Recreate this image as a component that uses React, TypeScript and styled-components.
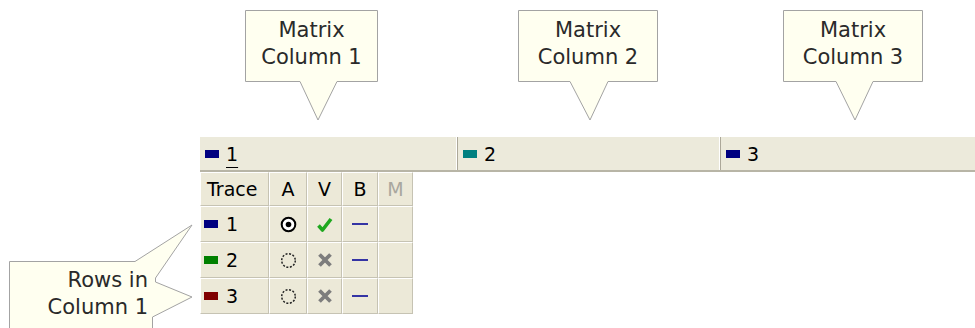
import React from "react";
import styled, { createGlobalStyle } from "styled-components";

const GlobalStyle = createGlobalStyle`
  html, body {
    margin: 0;
    padding: 0;
    background: #ffffff;
  }
  body {
    font-family: "DejaVu Sans", Verdana, sans-serif;
    color: #000;
  }
`;

const Page = styled.div`
  position: relative;
  width: 975px;
  height: 328px;
  box-sizing: border-box;
  padding: 137px 0 0 200px;
  overflow: hidden;
  background: #fff;
`;

/* ---- matrix column bar ---- */

const MatrixBar = styled.div`
  display: grid;
  grid-template-columns: 258px 263px 1fr;
  height: 33px;
  background: #eceadb;
  border-bottom: 2px solid #b8b5a6;
`;

const BarColumn = styled.div<{ $last?: boolean }>`
  display: flex;
  align-items: center;
  gap: 7px;
  padding-left: 5px;
  font-size: 19px;
  box-shadow: ${({ $last }) =>
    $last ? "none" : "inset -1px 0 0 #aca899, inset -2px 0 0 #ffffff"};
`;

const Swatch = styled.span<{ $color: string }>`
  display: inline-block;
  flex: none;
  width: 14px;
  height: 8px;
  background: ${({ $color }) => $color};
`;

const BarLabel = styled.span<{ $active?: boolean }>`
  line-height: 22px;
  text-decoration: ${({ $active }) => ($active ? "underline" : "none")};
  text-decoration-thickness: 1px;
  text-underline-offset: 6px;
`;

/* ---- trace table ---- */

const TraceGrid = styled.div`
  display: grid;
  grid-template-columns: 69px 38px 35px 36px 35px;
  grid-template-rows: 34px repeat(3, 36px);
  width: 213px;
  background: #ece9d8;
  font-size: 19px;
`;

const Cell = styled.div<{ $align?: "left" | "center"; $muted?: boolean }>`
  display: flex;
  align-items: center;
  justify-content: ${({ $align }) => ($align === "left" ? "flex-start" : "center")};
  gap: 8px;
  padding-left: ${({ $align }) => ($align === "left" ? "3px" : "0")};
  box-sizing: border-box;
  border-top: 1px solid #ffffff;
  border-left: 1px solid #ffffff;
  border-right: 1px solid #c6c3b3;
  border-bottom: 1px solid #c6c3b3;
  color: ${({ $muted }) => ($muted ? "#a9a79f" : "#000")};
`;

const HeadText = styled.span<{ $pad?: number }>`
  padding-left: ${({ $pad }) => $pad ?? 0}px;
`;

const Dash = styled.span`
  display: block;
  width: 16px;
  height: 2px;
  background: #3434a4;
`;

function Radio({ on }: { on: boolean }) {
  return (
    <svg width="17" height="17" viewBox="0 0 17 17">
      {on ? (
        <>
          <circle cx="8.5" cy="8.5" r="6.8" fill="#fff" stroke="#000" strokeWidth="2" />
          <circle cx="8.5" cy="8.5" r="2.8" fill="#000" />
        </>
      ) : (
        <circle
          cx="8.5"
          cy="8.5"
          r="6.8"
          fill="none"
          stroke="#222"
          strokeWidth="1.5"
          strokeDasharray="2 1.6"
        />
      )}
    </svg>
  );
}

function Check() {
  return (
    <svg width="17" height="17" viewBox="0 0 17 17">
      <path
        d="M2.5 9.5 L6.5 14 L15 3"
        fill="none"
        stroke="#1fa81f"
        strokeWidth="3.6"
        strokeLinejoin="round"
      />
    </svg>
  );
}

function Cross() {
  return (
    <svg width="16" height="16" viewBox="0 0 16 16">
      <path d="M2.5 2.5 L13.5 13.5 M13.5 2.5 L2.5 13.5" stroke="#7d7d7d" strokeWidth="3.8" />
    </svg>
  );
}

/* ---- callouts (annotations drawn over the page) ---- */

const CalloutLayer = styled.svg`
  position: absolute;
  left: 0;
  top: 0;
  width: 975px;
  height: 328px;
  pointer-events: none;
`;

const CalloutText = styled.div<{
  $left: number;
  $top: number;
  $width: number;
  $align: "center" | "right";
}>`
  position: absolute;
  left: ${({ $left }) => $left}px;
  top: ${({ $top }) => $top}px;
  width: ${({ $width }) => $width}px;
  text-align: ${({ $align }) => $align};
  font-size: 21px;
  line-height: 27px;
  color: #2a2a2a;
`;

const columns = [
  { label: "1", color: "#000080", active: true },
  { label: "2", color: "#008080" },
  { label: "3", color: "#000080" },
];

const traces = [
  { id: "1", color: "#000080", a: true, v: true },
  { id: "2", color: "#008000", a: false, v: false },
  { id: "3", color: "#800000", a: false, v: false },
];

const callouts = [
  { d: "M245.5 10.5 H377.5 V81.5 H337 L318 120 L300 81.5 H245.5 Z", left: 246, top: 17, width: 131, text: ["Matrix", "Column 1"] },
  { d: "M518.5 10.5 H657.5 V81.5 H608 L590 120 L570 81.5 H518.5 Z", left: 519, top: 17, width: 138, text: ["Matrix", "Column 2"] },
  { d: "M783.5 10.5 H922.5 V81.5 H873 L855 120 L836 81.5 H783.5 Z", left: 784, top: 17, width: 138, text: ["Matrix", "Column 3"] },
];

const rowsCallout = "M9.5 261.5 H135 L192 225 L155.5 278 V282 L192 297 L152.5 317 V340 H9.5 Z";

export default function App() {
  return (
    <>
      <GlobalStyle />
      <Page>
        <MatrixBar>
          {columns.map((c, i) => (
            <BarColumn key={c.label} $last={i === columns.length - 1}>
              <Swatch $color={c.color} />
              <BarLabel $active={c.active}>{c.label}</BarLabel>
            </BarColumn>
          ))}
        </MatrixBar>

        <TraceGrid>
          <Cell $align="left">
            <HeadText $pad={3}>Trace</HeadText>
          </Cell>
          <Cell>A</Cell>
          <Cell>V</Cell>
          <Cell>B</Cell>
          <Cell $muted>M</Cell>
          {traces.map((t) => (
            <React.Fragment key={t.id}>
              <Cell $align="left">
                <Swatch $color={t.color} />
                <span>{t.id}</span>
              </Cell>
              <Cell>
                <Radio on={t.a} />
              </Cell>
              <Cell>{t.v ? <Check /> : <Cross />}</Cell>
              <Cell>
                <Dash />
              </Cell>
              <Cell />
            </React.Fragment>
          ))}
        </TraceGrid>

        <CalloutLayer viewBox="0 0 975 328">
          {callouts.map((c) => (
            <path key={c.left} d={c.d} fill="#fffff0" stroke="#a3a3a3" strokeWidth="1" />
          ))}
          <path d={rowsCallout} fill="#fffff0" stroke="#a3a3a3" strokeWidth="1" />
        </CalloutLayer>

        {callouts.map((c) => (
          <CalloutText key={c.left} $left={c.left} $top={c.top} $width={c.width} $align="center">
            {c.text[0]}
            <br />
            {c.text[1]}
          </CalloutText>
        ))}
        <CalloutText $left={10} $top={267} $width={138} $align="right">
          Rows in
          <br />
          Column 1
        </CalloutText>
      </Page>
    </>
  );
}
